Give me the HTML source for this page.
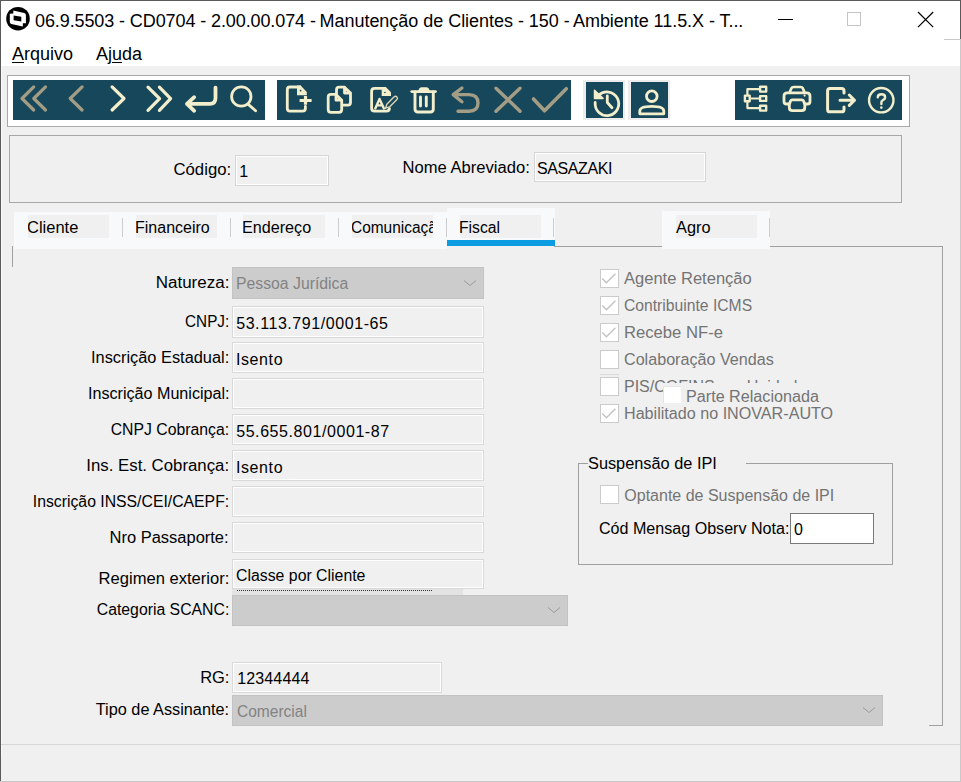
<!DOCTYPE html>
<html><head><meta charset="utf-8">
<style>
html,body{margin:0;padding:0}
body{width:961px;height:782px;position:relative;overflow:hidden;background:#f0f0f0;font-family:"Liberation Sans",sans-serif}
body>div,body div{position:absolute}
.t{white-space:nowrap;line-height:1}
u{text-decoration:underline;text-underline-offset:2px}
</style></head><body>
<div style="left:0px;top:0px;width:961px;height:66px;background:#fff"></div>
<div style="left:0px;top:0px;width:961px;height:1px;background:#5a5a5a"></div>
<div style="left:0px;top:0px;width:1px;height:782px;background:#5a5a5a"></div>
<div style="left:960px;top:0px;width:1px;height:39px;background:#5a5a5a"></div>
<div style="left:960px;top:39px;width:1px;height:743px;background:#c9c9c9"></div>
<div style="left:1px;top:66px;width:1px;height:690px;background:#fafafa"></div>
<div style="left:0px;top:781px;width:961px;height:1px;background:#c9c9c9"></div>
<svg style="position:absolute;left:4px;top:5px;" width="28" height="28" viewBox="4 5 28 28"><circle cx="18" cy="18.7" r="11.8" fill="#000"/><path d="M13.3 10.4 L24.2 12.9 Q25.9 13.3 25.9 15 L25.9 23.3 L22.8 23.3 L22.8 26.5 L11.4 24.1 Q9.8 23.7 9.8 22 L9.8 13.7 L13.3 13.4 Z" fill="#fff"/><path d="M13.6 15.4 L21.3 16.8 L21.3 21.6 L13.6 20.2 Z" fill="#000"/></svg>
<div class="t" style="left:35px;top:11.76px;font-size:18px;color:#000;letter-spacing:-0.1px">06.9.5503 - CD0704 - 2.00.00.074 -</div>
<div class="t" style="left:319.5px;top:11.76px;font-size:18px;color:#000;letter-spacing:-0.03px">Manutenção de Clientes - 150 -</div>
<div class="t" style="left:573px;top:11.76px;font-size:18px;color:#000;letter-spacing:-0.05px">Ambiente 11.5.X - T...</div>
<div style="left:778px;top:19px;width:15px;height:1px;background:#000"></div>
<div style="left:847px;top:12px;width:14px;height:14px;border:1px solid #c4c4c4;box-sizing:border-box"></div>
<svg style="position:absolute;left:915px;top:9px;" width="22" height="22" viewBox="915 9 22 22"><path d="M918 12 L933.2 27.2 M933.2 12 L918 27.2" stroke="#000" stroke-width="1.2" fill="none"/></svg>
<div style="left:944px;top:39px;width:16px;height:1px;background:#c8c8c8"></div>
<div class="t" style="left:12px;top:44.76px;font-size:18px;color:#000;"><u>A</u>rquivo</div>
<div class="t" style="left:96px;top:44.76px;font-size:18px;color:#000;">Aj<u>u</u>da</div>
<div style="left:7px;top:75px;width:903px;height:52px;background:#fff;border:1px solid #a8a8a8;box-sizing:border-box"></div>
<div style="left:13px;top:80px;width:252px;height:40px;background:#17475a"></div>
<div style="left:277px;top:80px;width:294px;height:40px;background:#17475a"></div>
<div style="left:583px;top:80px;width:42px;height:40px;background:#ececec"></div>
<div style="left:586px;top:82px;width:37px;height:36px;background:#17475a"></div>
<div style="left:628px;top:80px;width:42px;height:40px;background:#ececec"></div>
<div style="left:631px;top:82px;width:37px;height:36px;background:#17475a"></div>
<div style="left:735px;top:80px;width:167px;height:40px;background:#17475a"></div>
<svg style="position:absolute;left:0px;top:75px;" width="961" height="52" viewBox="0 75 961 52"><path d="M33.7 86.9 L22 98.5 L33.7 110 M45.5 86.9 L33.8 98.5 L45.5 110" stroke="#a39d85" stroke-width="3.2" fill="none" stroke-linecap="round" stroke-linejoin="round"/><path d="M82.1 86.9 L70.2 98.5 L82.1 110" stroke="#a39d85" stroke-width="3.2" fill="none" stroke-linecap="round" stroke-linejoin="round"/><path d="M112.1 86.9 L124 98.5 L112.1 110" stroke="#f3eecb" stroke-width="3.2" fill="none" stroke-linecap="round" stroke-linejoin="round"/><path d="M148 87.1 L159.6 98.7 L148 110.3 M159.4 87.1 L170.6 98.7 L159.4 110.3" stroke="#f3eecb" stroke-width="3.2" fill="none" stroke-linecap="round" stroke-linejoin="round"/><path d="M215.5 87.6 L215.5 98 Q215.5 103.9 209.7 103.9 L187 103.9 M194.2 97.2 L187 103.9 L194.2 110.8" stroke="#f3eecb" stroke-width="3.8" fill="none" stroke-linecap="round" stroke-linejoin="round"/><path d="M241.3 96.5 m-9.7 0 a9.7 9.7 0 1 0 19.4 0 a9.7 9.7 0 1 0 -19.4 0 M248.6 104.6 L255.6 110.8" stroke="#f3eecb" stroke-width="2.8" fill="none" stroke-linecap="round" stroke-linejoin="round"/><path d="M300 87 L290 87 Q287.3 87 287.3 89.7 L287.3 108.4 Q287.3 111.1 290 111.1 L302.6 111.1 Q305.4 111.1 305.4 108.4 L305.4 106.4" stroke="#f3eecb" stroke-width="2.8" fill="none" stroke-linecap="round" stroke-linejoin="round"/><path d="M298 85.6 L300.6 85.6 L306.8 92 L306.8 95.2 L297 95.2 L297 85.6 Z" fill="#f3eecb"/><circle cx="300.6" cy="90.6" r="0.9" fill="#17475a"/><path d="M299.6 100.5 L311.6 100.5 M305.5 95.9 L305.5 104.8" stroke="#f3eecb" stroke-width="3.2" fill="none" stroke-linecap="butt" stroke-linejoin="round"/><path d="M344.5 87.2 L339.2 87.2 Q336.5 87.2 336.5 90 L336.5 94.5 M343 105.2 L347.8 105.2 Q350.5 105.2 350.5 102.5 L350.5 93 L344.5 87.2 L344.5 93 L350.5 93" stroke="#f3eecb" stroke-width="2.8" fill="none" stroke-linecap="round" stroke-linejoin="round"/><path d="M336 94.4 L331 94.4 Q328.2 94.4 328.2 97.2 L328.2 109.5 Q328.2 112.3 331 112.3 L339 112.3 Q341.7 112.3 341.7 109.5 L341.7 100.2 L336 94.4 L336 100.2 L341.7 100.2" stroke="#f3eecb" stroke-width="2.8" fill="none" stroke-linecap="round" stroke-linejoin="round"/><path d="M383 88.4 L374.5 88.4 Q371.6 88.4 371.6 91.3 L371.6 108.2 Q371.6 111.1 374.5 111.1 L386.5 111.1 Q389.4 111.1 389.4 108.6" stroke="#f3eecb" stroke-width="2.8" fill="none" stroke-linecap="round" stroke-linejoin="round"/><path d="M381.7 87 L385.8 87 L391 92.2 L391 95.9 L381.7 95.9 Z" fill="#f3eecb"/><circle cx="384.9" cy="92.5" r="0.8" fill="#17475a"/><path d="M375.3 108.4 L379.5 98.9 L383.9 108.4 M376.7 105.4 L382.4 105.4" stroke="#f3eecb" stroke-width="2.4" fill="none" stroke-linecap="round" stroke-linejoin="round"/><path d="M385.6 108.2 L386.8 104.2 L394.2 96.8 Q395.6 95.7 396.9 97 Q398 98.3 396.9 99.6 L389.5 107 Z" stroke="#d9d5b4" stroke-width="1.4" fill="none" stroke-linejoin="round"/><path d="M411.8 91.6 L435.4 91.6" stroke="#f3eecb" stroke-width="2.9" fill="none" stroke-linecap="round" stroke-linejoin="round"/><path d="M417.6 91.5 L419.6 88.3 Q420.3 87.2 421.6 87.2 L426.4 87.2 Q427.7 87.2 428.4 88.3 L430.4 91.5 Z" fill="#f3eecb"/><path d="M415 92 L415 109 Q415 112 418 112 L430.3 112 Q433.3 112 433.3 109 L433.3 92" stroke="#f3eecb" stroke-width="2.9" fill="none" stroke-linecap="round" stroke-linejoin="round"/><path d="M420.5 97 L420.5 106 M426.3 97 L426.3 106" stroke="#f3eecb" stroke-width="2.9" fill="none" stroke-linecap="round" stroke-linejoin="round"/><path d="M461.9 88 L453.2 94.6 L461.9 101.8 M453.5 94.6 L469 94.6 Q478 94.6 478 103 Q478 111.2 469 111.2 L458 111.2" stroke="#a39d85" stroke-width="3.4" fill="none" stroke-linecap="round" stroke-linejoin="round"/><path d="M496 88.2 L520 111.2 M520 88.2 L496 111.2" stroke="#a39d85" stroke-width="3.4" fill="none" stroke-linecap="round" stroke-linejoin="round"/><path d="M533.5 99 L544.5 110.8 L566.3 88.7" stroke="#a39d85" stroke-width="3.6" fill="none" stroke-linecap="round" stroke-linejoin="round"/><path d="M598.5 95.5 A11.8 11.8 0 1 1 595.2 102.5" stroke="#f3eecb" stroke-width="2.8" fill="none" stroke-linecap="round" stroke-linejoin="round"/><path d="M594.5 90.2 L603 98.4 L594.5 98.4 Z" fill="#f3eecb" stroke="#f3eecb" stroke-width="1.5" stroke-linejoin="round"/><path d="M607.3 96 L607.3 102.5 L612 107.8" stroke="#f3eecb" stroke-width="2.8" fill="none" stroke-linecap="round" stroke-linejoin="round"/><path d="M651.8 96.2 m-5.3 0 a5.3 5.3 0 1 0 10.6 0 a5.3 5.3 0 1 0 -10.6 0" stroke="#f3eecb" stroke-width="2.8" fill="none" stroke-linecap="round" stroke-linejoin="round"/><path d="M639.8 113.8 L639.8 111 Q639.8 106.3 651.8 106.3 Q663.8 106.3 663.8 111 L663.8 113.8 Z" stroke="#f3eecb" stroke-width="2.8" fill="none" stroke-linecap="round" stroke-linejoin="round"/><path d="M744.9 95.6 H749.7 V101.2 H744.9 Z M760.1 86.8 H766.2 V91.6 H760.1 Z M760.1 96.1 H766.2 V100.9 H760.1 Z M760.1 105.8 H766.2 V110.6 H760.1 Z" stroke="#f3eecb" stroke-width="2.4" fill="none" stroke-linecap="butt" stroke-linejoin="round"/><path d="M747.4 95 V89.2 H759 M750.9 98.5 H759 M747.4 102 V108.1 H759" stroke="#f3eecb" stroke-width="2.2" fill="none" stroke-linecap="butt" stroke-linejoin="round"/><path d="M789.6 92.5 L791.3 88.4 Q792 87 793.6 87 L800.6 87 Q802.2 87 802.9 88.4 L804.6 92.5" stroke="#f3eecb" stroke-width="2.7" fill="none" stroke-linecap="round" stroke-linejoin="round"/><path d="M789 104 L786.5 104 Q784 104 784 101.5 L784 96 Q784 92.9 787.2 92.9 L806.8 92.9 Q810 92.9 810 96 L810 101.5 Q810 104 807.5 104 L805 104" stroke="#f3eecb" stroke-width="2.8" fill="none" stroke-linecap="round" stroke-linejoin="round"/><path d="M789.3 104.5 L790.5 101 Q791 99.9 792.3 99.9 L801.8 99.9 Q803.1 99.9 803.6 101 L804.8 104.5 L804.8 107.5 Q804.8 110.7 801.6 110.7 L792.5 110.7 Q789.3 110.7 789.3 107.5 Z" stroke="#f3eecb" stroke-width="2.8" fill="none" stroke-linecap="round" stroke-linejoin="round"/><circle cx="804.6" cy="95.6" r="1.1" fill="#f3eecb"/><path d="M844 93 L844 91 Q844 88.6 841.6 88.6 L830 88.6 Q827.6 88.6 827.6 91 L827.6 109.4 Q827.6 111.8 830 111.8 L841.6 111.8 Q844 111.8 844 109.4 L844 107" stroke="#f3eecb" stroke-width="3" fill="none" stroke-linecap="round" stroke-linejoin="round"/><path d="M840 100.2 L854.5 100.2 M849.3 95 L854.5 100.2 L849.3 105.4" stroke="#f3eecb" stroke-width="3" fill="none" stroke-linecap="round" stroke-linejoin="round"/><path d="M881.25 100.2 m-12.2 0 a12.2 12.2 0 1 0 24.4 0 a12.2 12.2 0 1 0 -24.4 0" stroke="#f3eecb" stroke-width="2.4" fill="none" stroke-linecap="round" stroke-linejoin="round"/><path d="M877.8 97.2 Q877.8 94.2 881.5 94.2 Q885.1 94.2 885.1 97.2 Q885.1 99.2 882.8 100.2 Q881.4 100.9 881.4 102.3 L881.4 104" stroke="#f3eecb" stroke-width="2.4" fill="none" stroke-linecap="round" stroke-linejoin="round"/><circle cx="881.3" cy="107.6" r="1.3" fill="#f3eecb"/></svg>
<div style="left:9px;top:135px;width:893px;height:68px;border:1px solid #a8a8a8;box-sizing:border-box"></div>
<div class="t" style="right:729.4px;top:161.76px;font-size:16px;color:#000;;transform:scaleX(1.046);transform-origin:right center">Código:</div>
<div style="left:235px;top:155px;width:94px;height:31px;background:#f0f0f0;border:1px solid #d5d5d5;box-shadow:inset 1px 1px 0 #fff,inset -1px -1px 0 #fff;box-sizing:border-box"></div>
<div class="t" style="left:239.2px;top:164.06px;font-size:16px;color:#000;">1</div>
<div class="t" style="right:431.20000000000005px;top:159.76px;font-size:16px;color:#000;;transform:scaleX(1.036);transform-origin:right center">Nome Abreviado:</div>
<div style="left:534px;top:152px;width:172px;height:30px;background:#f0f0f0;border:1px solid #d5d5d5;box-shadow:inset 1px 1px 0 #fff,inset -1px -1px 0 #fff;box-sizing:border-box"></div>
<div class="t" style="left:537.0px;top:161.26px;font-size:16px;color:#000;letter-spacing:-0.4px">SASAZAKI</div>
<div style="left:554px;top:246px;width:389px;height:1px;background:#a0a0a0"></div>
<div style="left:942px;top:246px;width:1px;height:480px;background:#a0a0a0"></div>
<div style="left:929px;top:725px;width:14px;height:1px;background:#a0a0a0"></div>
<div style="left:12px;top:246px;width:1px;height:21px;background:#a0a0a0"></div>
<div style="left:14px;top:212px;width:433px;height:37px;background:#f8f9fb"></div>
<div style="left:447px;top:208px;width:108px;height:32px;background:#f8f9fb"></div>
<div style="left:447px;top:240px;width:108px;height:6px;background:#0c9ce2"></div>
<div style="left:662px;top:211px;width:108px;height:38px;background:#f8f9fb"></div>
<div style="left:28px;top:215px;width:81px;height:23px;background:#f0f0f0;overflow:hidden"></div>
<div style="left:136px;top:215px;width:81px;height:23px;background:#f0f0f0;overflow:hidden"></div>
<div style="left:243px;top:215px;width:82px;height:23px;background:#f0f0f0;overflow:hidden"></div>
<div style="left:351.5px;top:215px;width:81.5px;height:23px;background:#f0f0f0;overflow:hidden"></div>
<div style="left:460px;top:215px;width:81px;height:23px;background:#f0f0f0;overflow:hidden"></div>
<div style="left:676px;top:215px;width:81px;height:23px;background:#f0f0f0;overflow:hidden"></div>
<div style="left:122px;top:218px;width:1px;height:19px;background:#cdcdcd"></div>
<div style="left:230px;top:218px;width:1px;height:19px;background:#cdcdcd"></div>
<div style="left:338px;top:218px;width:1px;height:19px;background:#cdcdcd"></div>
<div style="left:446px;top:218px;width:1px;height:19px;background:#cdcdcd"></div>
<div style="left:553px;top:218px;width:1px;height:19px;background:#cdcdcd"></div>
<div style="left:769px;top:218px;width:1px;height:19px;background:#cdcdcd"></div>
<div style="left:28px;top:215px;width:81px;height:23px;overflow:hidden">
<div class="t" style="left:-1px;top:4.56px;font-size:16px;color:#000;transform:scaleX(1.03);transform-origin:left center">Cliente</div></div>
<div style="left:136px;top:215px;width:81px;height:23px;overflow:hidden">
<div class="t" style="left:-1px;top:4.56px;font-size:16px;color:#000;transform:scaleX(1.0);transform-origin:left center">Financeiro</div></div>
<div style="left:243px;top:215px;width:82px;height:23px;overflow:hidden">
<div class="t" style="left:-1px;top:4.56px;font-size:16px;color:#000;transform:scaleX(1.01);transform-origin:left center">Endereço</div></div>
<div style="left:351.5px;top:215px;width:81.5px;height:23px;overflow:hidden">
<div class="t" style="left:-1px;top:4.56px;font-size:16px;color:#000;transform:scaleX(0.965);transform-origin:left center">Comunicação</div></div>
<div style="left:460px;top:215px;width:81px;height:23px;overflow:hidden">
<div class="t" style="left:-1px;top:4.56px;font-size:16px;color:#000;transform:scaleX(0.98);transform-origin:left center">Fiscal</div></div>
<div style="left:676px;top:215px;width:81px;height:23px;overflow:hidden">
<div class="t" style="left:-0.5px;top:4.56px;font-size:16px;color:#000;transform:scaleX(1.02);transform-origin:left center">Agro</div></div>
<div class="t" style="right:732px;top:274.76px;font-size:16px;color:#000;;transform:scaleX(1.062);transform-origin:right center">Natureza:</div>
<div class="t" style="right:732px;top:313.76px;font-size:16px;color:#000;;transform:scaleX(0.955);transform-origin:right center">CNPJ:</div>
<div class="t" style="right:732px;top:349.76px;font-size:16px;color:#000;;transform:scaleX(1.022);transform-origin:right center">Inscrição Estadual:</div>
<div class="t" style="right:732px;top:385.76px;font-size:16px;color:#000;;transform:scaleX(1.007);transform-origin:right center">Inscrição Municipal:</div>
<div class="t" style="right:732px;top:421.76px;font-size:16px;color:#000;;transform:scaleX(0.986);transform-origin:right center">CNPJ Cobrança:</div>
<div class="t" style="right:732px;top:457.76px;font-size:16px;color:#000;;transform:scaleX(1.049);transform-origin:right center">Ins. Est. Cobrança:</div>
<div class="t" style="right:732px;top:493.76px;font-size:16px;color:#000;;transform:scaleX(0.986);transform-origin:right center">Inscrição INSS/CEI/CAEPF:</div>
<div class="t" style="right:732px;top:529.76px;font-size:16px;color:#000;;transform:scaleX(1.03);transform-origin:right center">Nro Passaporte:</div>
<div class="t" style="right:732px;top:571.36px;font-size:16px;color:#000;;transform:scaleX(1.035);transform-origin:right center">Regimen exterior:</div>
<div class="t" style="right:732px;top:601.76px;font-size:16px;color:#000;;transform:scaleX(0.987);transform-origin:right center">Categoria SCANC:</div>
<div class="t" style="right:732px;top:669.76px;font-size:16px;color:#000;;transform:scaleX(1.03);transform-origin:right center">RG:</div>
<div class="t" style="right:732px;top:702.26px;font-size:16px;color:#000;;transform:scaleX(1.017);transform-origin:right center">Tipo de Assinante:</div>
<div style="left:232px;top:267px;width:252px;height:32px;background:#cccccc;border:1px solid #c3c3c3;box-sizing:border-box"></div>
<svg style="position:absolute;left:462px;top:278px;" width="16" height="10" viewBox="462 278 16 10"><path d="M464 280.5 L470 285.5 L476 280.5" stroke="#9a9a9a" stroke-width="1" fill="none"/></svg>
<div class="t" style="left:235.6px;top:275.71px;font-size:16px;color:#838383;;transform:scaleX(0.986);transform-origin:left center">Pessoa Jurídica</div>
<div style="left:232px;top:306px;width:252px;height:32px;background:#f0f0f0;border:1px solid #d9d9d9;box-shadow:inset 1px 1px 0 #fff,inset -1px -1px 0 #fff;box-sizing:border-box"></div>
<div class="t" style="left:236.2px;top:315.56px;font-size:16px;color:#000;letter-spacing:0.57px">53.113.791/0001-65</div>
<div style="left:232px;top:342px;width:252px;height:31px;background:#f0f0f0;border:1px solid #d9d9d9;box-shadow:inset 1px 1px 0 #fff,inset -1px -1px 0 #fff;box-sizing:border-box"></div>
<div class="t" style="left:235.9px;top:351.86px;font-size:16px;color:#000;letter-spacing:0.62px">Isento</div>
<div style="left:232px;top:378px;width:252px;height:31px;background:#f0f0f0;border:1px solid #d9d9d9;box-shadow:inset 1px 1px 0 #fff,inset -1px -1px 0 #fff;box-sizing:border-box"></div>
<div style="left:232px;top:414px;width:252px;height:31px;background:#f0f0f0;border:1px solid #d9d9d9;box-shadow:inset 1px 1px 0 #fff,inset -1px -1px 0 #fff;box-sizing:border-box"></div>
<div class="t" style="left:236.2px;top:423.56px;font-size:16px;color:#000;letter-spacing:0.57px">55.655.801/0001-87</div>
<div style="left:232px;top:450px;width:252px;height:31px;background:#f0f0f0;border:1px solid #d9d9d9;box-shadow:inset 1px 1px 0 #fff,inset -1px -1px 0 #fff;box-sizing:border-box"></div>
<div class="t" style="left:235.9px;top:459.86px;font-size:16px;color:#000;letter-spacing:0.62px">Isento</div>
<div style="left:232px;top:486px;width:252px;height:31px;background:#f0f0f0;border:1px solid #d9d9d9;box-shadow:inset 1px 1px 0 #fff,inset -1px -1px 0 #fff;box-sizing:border-box"></div>
<div style="left:232px;top:522px;width:252px;height:31px;background:#f0f0f0;border:1px solid #d9d9d9;box-shadow:inset 1px 1px 0 #fff,inset -1px -1px 0 #fff;box-sizing:border-box"></div>
<div style="left:232px;top:588px;width:231px;height:7px;background:#e3e3e3"></div>
<div style="left:237px;top:590px;width:195px;height:1px;border-top:1px dotted #333"></div>
<div style="left:232px;top:559px;width:252px;height:30px;background:#f0f0f0;border:1px solid #d9d9d9;box-shadow:inset 1px 1px 0 #fff,inset -1px -1px 0 #fff;box-sizing:border-box"></div>
<div class="t" style="left:235.8px;top:568.06px;font-size:16px;color:#000;transform:scaleX(0.99);transform-origin:left center">Classe por Cliente</div>
<div style="left:232px;top:595px;width:336px;height:31px;background:#cccccc;border:1px solid #c3c3c3;box-sizing:border-box"></div>
<svg style="position:absolute;left:546px;top:605px;" width="16" height="10" viewBox="546 605 16 10"><path d="M548 607.5 L554 612.5 L560 607.5" stroke="#9a9a9a" stroke-width="1" fill="none"/></svg>
<div style="left:232px;top:662px;width:210px;height:31px;background:#f0f0f0;border:1px solid #d9d9d9;box-shadow:inset 1px 1px 0 #fff,inset -1px -1px 0 #fff;box-sizing:border-box"></div>
<div class="t" style="left:237.2px;top:670.96px;font-size:16px;color:#000;letter-spacing:0.14px">12344444</div>
<div style="left:232px;top:695px;width:651px;height:31px;background:#cccccc;border:1px solid #c3c3c3;box-sizing:border-box"></div>
<svg style="position:absolute;left:861px;top:705px;" width="16" height="10" viewBox="861 705 16 10"><path d="M863 707.5 L869 712.5 L875 707.5" stroke="#9a9a9a" stroke-width="1" fill="none"/></svg>
<div class="t" style="left:236.6px;top:703.71px;font-size:16px;color:#838383;;transform:scaleX(0.97);transform-origin:left center">Comercial</div>
<div style="left:600px;top:269px;width:19px;height:19px;background:#ffffff;border:1px solid #cbcbcb;box-sizing:border-box"></div>
<svg style="position:absolute;left:600px;top:269px;" width="19" height="19" viewBox="600 269 19 19"><path d="M602.2 278.6 L606.4 282.8 L615.4 273.8" stroke="#c2c2c2" stroke-width="1.4" fill="none"/></svg>
<div class="t" style="left:624.0px;top:271.26px;font-size:16px;color:#747474;;transform:scaleX(1.033);transform-origin:left center">Agente Retenção</div>
<div style="left:600px;top:296px;width:19px;height:19px;background:#ffffff;border:1px solid #cbcbcb;box-sizing:border-box"></div>
<svg style="position:absolute;left:600px;top:296px;" width="19" height="19" viewBox="600 296 19 19"><path d="M602.2 305.6 L606.4 309.8 L615.4 300.8" stroke="#c2c2c2" stroke-width="1.4" fill="none"/></svg>
<div class="t" style="left:624.0px;top:298.26px;font-size:16px;color:#747474;;transform:scaleX(0.98);transform-origin:left center">Contribuinte ICMS</div>
<div style="left:600px;top:323px;width:19px;height:19px;background:#ffffff;border:1px solid #cbcbcb;box-sizing:border-box"></div>
<svg style="position:absolute;left:600px;top:323px;" width="19" height="19" viewBox="600 323 19 19"><path d="M602.2 332.6 L606.4 336.8 L615.4 327.8" stroke="#c2c2c2" stroke-width="1.4" fill="none"/></svg>
<div class="t" style="left:624.0px;top:325.26px;font-size:16px;color:#747474;;transform:scaleX(1.04);transform-origin:left center">Recebe NF-e</div>
<div style="left:600px;top:350px;width:19px;height:19px;background:#ffffff;border:1px solid #cbcbcb;box-sizing:border-box"></div>
<div class="t" style="left:624.0px;top:352.26px;font-size:16px;color:#747474;;transform:scaleX(1.008);transform-origin:left center">Colaboração Vendas</div>
<div style="left:600px;top:377px;width:19px;height:19px;background:#ffffff;border:1px solid #cbcbcb;box-sizing:border-box"></div>
<div class="t" style="left:624.0px;top:379.26px;font-size:16px;color:#747474;;transform:scaleX(1.0);transform-origin:left center">PIS/COFINS por Unidade</div>
<div style="left:600px;top:404px;width:19px;height:19px;background:#ffffff;border:1px solid #cbcbcb;box-sizing:border-box"></div>
<svg style="position:absolute;left:600px;top:404px;" width="19" height="19" viewBox="600 404 19 19"><path d="M602.2 413.6 L606.4 417.8 L615.4 408.8" stroke="#c2c2c2" stroke-width="1.4" fill="none"/></svg>
<div class="t" style="left:624.0px;top:406.26px;font-size:16px;color:#747474;;transform:scaleX(1.008);transform-origin:left center">Habilitado no INOVAR-AUTO</div>
<div style="left:600px;top:374px;width:19px;height:1px;background:#d9d9d9"></div>
<div style="left:663px;top:383px;width:200px;height:20px;background:#f0f0f0"></div>
<div style="left:663px;top:386px;width:18px;height:17px;background:#ffffff;border-top:1px solid #e4e4e4;border-left:1px solid #e4e4e4;box-sizing:border-box"></div>
<div class="t" style="left:686.2px;top:388.76px;font-size:16px;color:#747474;;transform:scaleX(1.01);transform-origin:left center">Parte Relacionada</div>
<div style="left:578px;top:463px;width:315px;height:102px;border:1px solid #a0a0a0;box-sizing:border-box"></div>
<div style="left:588px;top:455px;width:158px;height:16px;background:#f0f0f0"></div>
<div class="t" style="left:587.6px;top:456.46px;font-size:16px;color:#000;;transform:scaleX(1.02);transform-origin:left center">Suspensão de IPI</div>
<div style="left:600px;top:485px;width:19px;height:19px;background:#ffffff;border:1px solid #cbcbcb;box-sizing:border-box"></div>
<div class="t" style="left:624.3px;top:487.76px;font-size:16px;color:#747474;">Optante de Suspensão de IPI</div>
<div class="t" style="left:599.2px;top:520.76px;font-size:16px;color:#000;;transform:scaleX(1.005);transform-origin:left center">Cód Mensag Observ Nota:</div>
<div style="left:790px;top:513px;width:84px;height:31px;background:#fff;border:1px solid #7a7a7a;box-sizing:border-box"></div>
<div class="t" style="left:794px;top:521.56px;font-size:16px;color:#000;">0</div>
<div style="left:1px;top:744px;width:959px;height:1px;background:#d7d7d7"></div>
</body></html>
